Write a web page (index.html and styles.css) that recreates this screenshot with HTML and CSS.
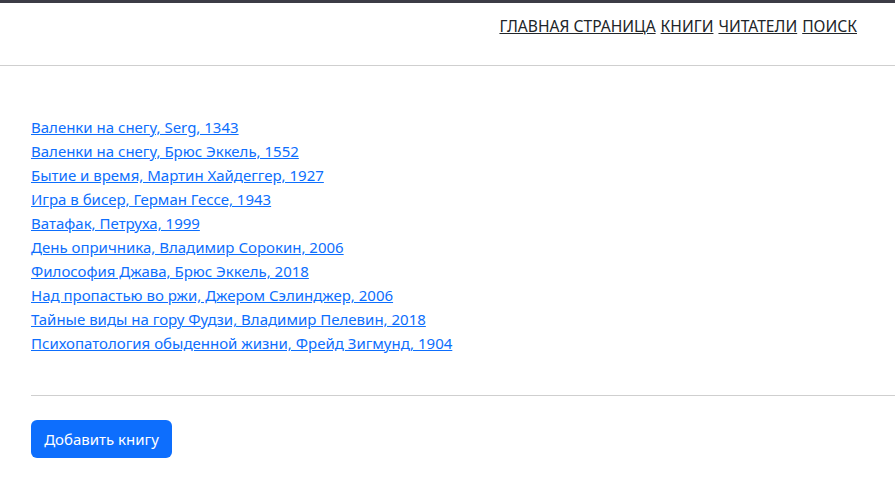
FILE: index.html
```html
<!DOCTYPE html>
<html lang="ru">
<head>
<meta charset="utf-8">
<title>Книги</title>
<link rel="stylesheet" href="styles.css">
</head>
<body>
<header class="topbar">
  <nav class="nav">
    <a href="#">ГЛАВНАЯ СТРАНИЦА</a>
    <a href="#">КНИГИ</a>
    <a href="#">ЧИТАТЕЛИ</a>
    <a href="#">ПОИСК</a>
  </nav>
</header>
<main class="content">
  <ul class="books">
    <li><a href="#">Валенки на снегу, Serg, 1343</a></li>
    <li><a href="#">Валенки на снегу, Брюс Эккель, 1552</a></li>
    <li><a href="#">Бытие и время, Мартин Хайдеггер, 1927</a></li>
    <li><a href="#">Игра в бисер, Герман Гессе, 1943</a></li>
    <li><a href="#">Ватафак, Петруха, 1999</a></li>
    <li><a href="#">День опричника, Владимир Сорокин, 2006</a></li>
    <li><a href="#">Философия Джава, Брюс Эккель, 2018</a></li>
    <li><a href="#">Над пропастью во ржи, Джером Сэлинджер, 2006</a></li>
    <li><a href="#">Тайные виды на гору Фудзи, Владимир Пелевин, 2018</a></li>
    <li><a href="#">Психопатология обыденной жизни, Фрейд Зигмунд, 1904</a></li>
  </ul>
  <hr class="divider">
  <button class="btn" type="button">Добавить книгу</button>
</main>
</body>
</html>
```

FILE: styles.css
```css
html, body {
  margin: 0;
  padding: 0;
}
body {
  font-family: "Noto Sans", "Open Sans", sans-serif;
  font-size: 15px;
  line-height: 24px;
  color: #212529;
  background: #fff;
  border-top: 3px solid #3c3c46;
  overflow-x: hidden;
}
.topbar {
  height: 63px;
  border-bottom: 1px solid #cfcfcf;
  display: flex;
  justify-content: flex-end;
  box-sizing: border-box;
  padding: 11px 38px 0 0;
}
.nav {
  display: flex;
  gap: 5px;
  font-size: 15.6px;
}
.nav a {
  color: #212529;
  text-decoration: underline;
}
.content {
  padding: 0 0 0 31px;
}
.books {
  list-style: none;
  margin: 0;
  padding: 49px 0 0 0;
}
.books a {
  color: #0d6efd;
  text-decoration: underline;
}
.divider {
  margin: 40px 0 24px 0;
  border: 0;
  border-top: 1px solid #cfcfcf;
}
.btn {
  font-family: inherit;
  font-size: 15px;
  color: #fff;
  background: #0d6efd;
  border: 0;
  border-radius: 6px;
  width: 141px;
  height: 38px;
  padding: 0;
}
```
